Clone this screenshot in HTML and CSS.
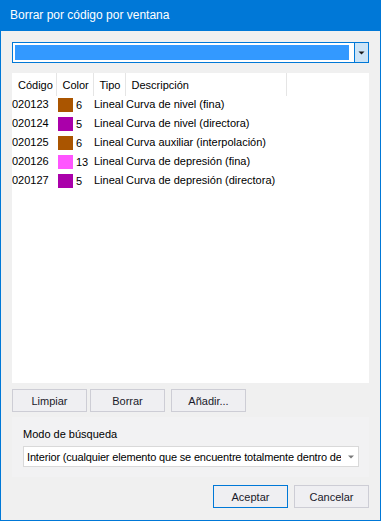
FILE: index.html
```html
<!DOCTYPE html>
<html lang="es">
<head>
<meta charset="utf-8">
<title>Borrar por código por ventana</title>
<link rel="stylesheet" href="styles.css">
</head>
<body>
<div class="window">
  <div class="titlebar">Borrar por código por ventana</div>
  <div class="content">
    <div class="combo">
      <div class="combo-field"><div class="combo-sel"></div></div>
      <div class="combo-btn">
        <svg width="7" height="4" viewBox="0 0 7 4"><path d="M0.5 0.5h6l-3 3z" fill="#1a1a1a"/></svg>
      </div>
    </div>
    <div class="list">
      <table class="grid">
        <colgroup>
          <col class="c-code"><col class="c-color"><col class="c-type"><col class="c-desc"><col>
        </colgroup>
        <thead>
          <tr><th>Código</th><th>Color</th><th>Tipo</th><th>Descripción</th><th class="th-fill"></th></tr>
        </thead>
        <tbody>
          <tr><td class="code">020123</td><td><span class="swatch brown"></span>6</td><td>Lineal</td><td colspan="2">Curva de nivel (fina)</td></tr>
          <tr><td class="code">020124</td><td><span class="swatch purple"></span>5</td><td>Lineal</td><td colspan="2">Curva de nivel (directora)</td></tr>
          <tr><td class="code">020125</td><td><span class="swatch brown"></span>6</td><td>Lineal</td><td colspan="2">Curva auxiliar (interpolación)</td></tr>
          <tr><td class="code">020126</td><td><span class="swatch pink"></span>13</td><td>Lineal</td><td colspan="2">Curva de depresión (fina)</td></tr>
          <tr><td class="code">020127</td><td><span class="swatch purple"></span>5</td><td>Lineal</td><td colspan="2">Curva de depresión (directora)</td></tr>
        </tbody>
      </table>
    </div>
    <div class="actions">
      <button class="btn">Limpiar</button>
      <button class="btn">Borrar</button>
      <button class="btn btn-add">Añadir...</button>
    </div>
    <div class="group">
      <div class="group-label">Modo de búsqueda</div>
      <div class="select">
        <span class="select-text">Interior (cualquier elemento que se encuentre totalmente dentro de</span>
        <span class="select-arrow">
          <svg width="6" height="4" viewBox="0 0 6 4"><path d="M0 0.5h6l-3 3z" fill="#7a7a7a"/></svg>
        </span>
      </div>
    </div>
    <div class="footer">
      <button class="btn btn-default">Aceptar</button>
      <button class="btn">Cancelar</button>
    </div>
  </div>
</div>
</body>
</html>
```
FILE: styles.css
```css
html, body {
  margin: 0;
  padding: 0;
}
body {
  width: 381px;
  height: 521px;
  font-family: "Liberation Sans", Arial, sans-serif;
  font-size: 11px;
  color: #000;
}
.window {
  box-sizing: border-box;
  width: 381px;
  height: 521px;
  background: #f0f0f0;
  border: 1px solid #0078d7;
  border-top: none;
  display: flex;
  flex-direction: column;
}
.titlebar {
  height: 31px;
  line-height: 31px;
  margin: 0 -1px;
  padding-left: 10px;
  background: #0078d7;
  color: #fff;
  font-size: 12px;
}
.content {
  padding: 11px 11px 0 11px;
  display: flex;
  flex-direction: column;
}
.combo {
  box-sizing: border-box;
  height: 21px;
  border: 1px solid #0078d7;
  background: #fff;
  display: flex;
}
.combo-field {
  flex: 1;
  padding: 2px 5px 2px 2px;
  background: #fff;
}
.combo-sel {
  height: 15px;
  background: #3399ff;
}
.combo-btn {
  width: 13px;
  border-left: 1px solid #0078d7;
  background: #cce4f7;
  display: flex;
  align-items: center;
  justify-content: center;
}
.combo-btn svg {
  display: block;
}
.list {
  margin-top: 10px;
  height: 310px;
  background: #fff;
  overflow: hidden;
}
.grid {
  border-collapse: collapse;
  table-layout: fixed;
  width: 100%;
}
.c-code { width: 44px; }
.c-color { width: 37px; }
.c-type { width: 32px; }
.c-desc { width: 161px; }
.grid th {
  height: 23px;
  padding: 0 0 0 6px;
  font-weight: normal;
  text-align: left;
  white-space: nowrap;
  border-right: 1px solid #e5e5e5;
  box-sizing: border-box;
}
.grid th.th-fill {
  border-right: none;
}
.grid td {
  height: 17px;
  padding: 0 0 2px 1px;
  line-height: 13px;
  white-space: nowrap;
  overflow: visible;
  vertical-align: middle;
}
.grid td.code {
  padding-left: 0;
}
.swatch {
  display: inline-block;
  width: 15px;
  height: 14px;
  margin: 0 3px 0 1px;
  vertical-align: -3px;
}
.brown { background: #aa5500; }
.purple { background: #aa00aa; }
.pink { background: #ff55ff; }
.actions {
  margin-top: 6px;
  display: flex;
}
.btn {
  box-sizing: border-box;
  width: 75px;
  height: 23px;
  padding: 0;
  border: 1px solid #cdcdd5;
  background: #efeff2;
  font-family: "Liberation Sans", Arial, sans-serif;
  font-size: 11px;
  color: #1a1a2a;
}
.actions .btn + .btn {
  margin-left: 3px;
}
.actions .btn.btn-add {
  margin-left: 6px;
}
.group {
  margin-top: 5px;
  padding: 10px 10px 10px 11px;
  background: #f2f2f3;
}
.group-label {
  line-height: 14px;
  height: 14px;
  color: #000;
}
.select {
  box-sizing: border-box;
  margin-top: 5px;
  height: 21px;
  border: 1px solid #d9d9d9;
  background: #fff;
  display: flex;
  align-items: center;
}
.select-text {
  flex: 1;
  padding-left: 3px;
  white-space: nowrap;
  overflow: hidden;
  width: 0;
  margin-right: 2px;
  letter-spacing: -0.17px;
}
.select-arrow {
  width: 15px;
  display: flex;
  justify-content: center;
}
.select-arrow svg {
  display: block;
}
.footer {
  margin-top: 8px;
  display: flex;
  justify-content: flex-end;
}
.footer .btn + .btn {
  margin-left: 6px;
}
.btn-default {
  border-color: #0078d7;
}
```
